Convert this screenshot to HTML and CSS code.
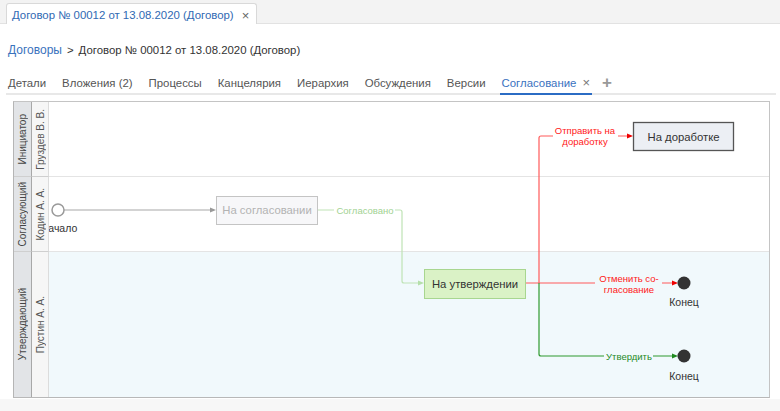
FILE: index.html
```html
<!DOCTYPE html>
<html lang="ru">
<head>
<meta charset="utf-8">
<title>Договор № 00012</title>
<link rel="stylesheet" href="styles.css">
</head>
<body>
<div class="doc-tabs">
  <div class="doc-tab"><span>Договор № 00012 от 13.08.2020 (Договор)</span><span class="x">×</span></div>
</div>
<div class="breadcrumb"><span class="link">Договоры</span><span class="sep">&gt;</span><span>Договор № 00012 от 13.08.2020 (Договор)</span></div>
<div class="tabs">
  <div class="tab">Детали</div>
  <div class="tab">Вложения (2)</div>
  <div class="tab">Процессы</div>
  <div class="tab">Канцелярия</div>
  <div class="tab">Иерархия</div>
  <div class="tab">Обсуждения</div>
  <div class="tab">Версии</div>
  <div class="tab active">Согласование<span class="x">×</span></div>
  <div class="tab plus">+</div>
</div>
<div class="diagram">
  <div class="lane lane-1">
    <div class="role"><span>Инициатор</span></div>
    <div class="person"><span>Груздев В. В.</span></div>
    <div class="body"></div>
  </div>
  <div class="lane lane-2">
    <div class="role"><span>Согласующий</span></div>
    <div class="person"><span>Кодин А. А.</span></div>
    <div class="body"></div>
  </div>
  <div class="lane lane-3">
    <div class="role"><span>Утверждающий</span></div>
    <div class="person"><span>Пустин А. А.</span></div>
    <div class="body"></div>
  </div>
  <svg class="canvas" width="720" height="295" viewBox="49 103 720 295" xmlns="http://www.w3.org/2000/svg">
    <g fill="none" stroke-width="1.2">
      <path d="M64 211 H211" stroke="#a8a8a8"/>
      <path d="M317 211 H334 M395 211 H400 Q402 211 402 213 V282 Q402 284 404 284 H419" stroke="#bfe3b5"/>
      <path d="M526 284 H595 M662 284 H672" stroke="#ff5a5a"/>
      <path d="M539 284 V139 Q539 137 541 137 H553 M618 137 H628" stroke="#ff5a5a"/>
      <path d="M539 284 V355 Q539 357 541 357 H604 M653 357 H672" stroke="#2f9a2f"/>
    </g>
    <polygon points="216,211 210,208.5 210,213.5" fill="#999"/>
    <polygon points="424,284 418,281.5 418,286.5" fill="#b5dfaa"/>
    <polygon points="633,137 627,134.5 627,139.5" fill="#e00"/>
    <polygon points="678,284 672,281.5 672,286.5" fill="#e00"/>
    <polygon points="678,357 672,354.5 672,359.5" fill="#1f8a1f"/>

    <circle cx="58" cy="211" r="6" fill="#fff" stroke="#9a9a9a" stroke-width="1.5"/>
    <text class="evt" x="59" y="233">Начало</text>

    <rect x="216.5" y="197.5" width="101" height="28" fill="#f7f7f9" stroke="#c4c4c4"/>
    <text class="node dim" x="267" y="215">На согласовании</text>
    <text class="lbl lightgreen" x="365" y="214.5">Согласовано</text>

    <rect x="424.5" y="270.5" width="101" height="29" fill="#daf2c6" stroke="#a8d690"/>
    <text class="node" x="475" y="288.5">На утверждении</text>

    <text class="lbl red" x="585" y="135">Отправить на</text>
    <text class="lbl red" x="585" y="146">доработку</text>
    <rect x="633.5" y="123.5" width="100" height="28" fill="#eceff4" stroke="#555" stroke-width="1.3"/>
    <text class="node" x="683.5" y="141.5">На доработке</text>

    <text class="lbl red" x="629" y="282.5">Отменить со-</text>
    <text class="lbl red" x="629" y="294">гласование</text>
    <circle cx="684" cy="284" r="6.5" fill="#333"/>
    <text class="evt" x="684" y="307">Конец</text>

    <text class="lbl green" x="629" y="361">Утвердить</text>
    <circle cx="684" cy="357" r="6.5" fill="#333"/>
    <text class="evt" x="684" y="381">Конец</text>
  </svg>
</div>
<div class="hscroll"></div>
</body>
</html>
```

FILE: styles.css
```css
html, body {
  margin: 0;
  padding: 0;
  background: #fff;
  font-family: "Liberation Sans", Arial, sans-serif;
  font-size: 11.4px;
  color: #333;
}

.doc-tabs {
  height: 24px;
  box-sizing: border-box;
  background: #f3f3f3;
  border-bottom: 1px solid #e2e2e2;
  display: flex;
  align-items: flex-end;
  padding-left: 6px;
}

.doc-tab {
  height: 21px;
  box-sizing: border-box;
  background: #fff;
  border: 1px solid #d9d9d9;
  border-bottom: none;
  border-radius: 3px 3px 0 0;
  margin-bottom: -1px;
  padding: 2px 7px 0 5px;
  display: flex;
  align-items: center;
  gap: 8px;
  color: #3069b3;
}

.doc-tab .x {
  color: #666;
  font-size: 13px;
}

.breadcrumb {
  padding: 19px 8px 0;
  line-height: 14px;
  height: 14px;
  color: #333;
}

.breadcrumb .link {
  color: #3a72bd;
  font-size: 12px;
}

.breadcrumb .sep {
  margin: 0 5px 0 5px;
}

.tabs {
  margin: 0 4px 0 6px;
  padding-top: 19px;
  display: flex;
  gap: 12px;
  border-bottom: 2px solid #e8e8e8;
}

.tab {
  padding: 0 2px 3px;
  line-height: 14px;
  color: #555;
  border-bottom: 2px solid transparent;
  margin-bottom: -2px;
  display: flex;
  gap: 6px;
}

.tab.active {
  color: #3a72c0;
  border-bottom-color: #2b6cc4;
}

.tab.active .x {
  color: #777;
  font-size: 13px;
  line-height: 14px;
}

.tab.plus {
  margin-left: -4px;
  color: #999;
  font-size: 17px;
  font-weight: bold;
  line-height: 14px;
}

.diagram {
  position: relative;
  margin: 6px 0 0 13px;
  width: 757px;
  height: 297px;
  box-sizing: border-box;
  border: 1px solid #c4c4c4;
  border-left-color: #b5b5b5;
  border-bottom-color: #b8b8b8;
  display: flex;
  flex-direction: column;
}

.lane {
  display: flex;
  border-bottom: 1px solid #e4e4e4;
}

.lane-1 { height: 75px; }
.lane-2 { height: 74px; }
.lane-3 { height: 146px; border-bottom: none; }

.role {
  width: 17px;
  flex: none;
  background: #e2e4e7;
  border-right: 1px solid #a8a8a8;
  display: flex;
  align-items: center;
  justify-content: center;
  color: #444;
  font-size: 10px;
}

.person {
  width: 16px;
  flex: none;
  background: #f6f6f6;
  border-right: 1px solid #dcdcdc;
  display: flex;
  align-items: center;
  justify-content: center;
  color: #555;
  font-size: 10px;
}

.role span,
.person span {
  writing-mode: vertical-rl;
  transform: rotate(180deg);
  white-space: nowrap;
}

.lane .role, .lane .person {
  border-bottom: 1px solid #cfcfcf;
  margin-bottom: -1px;
}

.lane-3 .role, .lane-3 .person {
  border-bottom: none;
  margin-bottom: 0;
}

.body {
  flex: 1;
  background: #fff;
}

.lane-3 .body {
  background: #f1f9fc;
}

.canvas {
  position: absolute;
  left: 35px;
  top: 0;
  overflow: hidden;
  font-family: "Liberation Sans", Arial, sans-serif;
}

.canvas text {
  text-anchor: middle;
}

.canvas .node {
  font-size: 11.3px;
  fill: #333;
}

.canvas .node.dim {
  fill: #b3b3b3;
}

.canvas .lbl {
  font-size: 9.5px;
}

.canvas .red { fill: #ff2020; }
.canvas .green { fill: #1f8a1f; }
.canvas .lightgreen { fill: #9fd292; }

.canvas .evt {
  font-size: 10.5px;
  fill: #333;
}

.hscroll {
  margin-top: 1px;
  height: 12px;
  background: #f7f7f7;
}
```
